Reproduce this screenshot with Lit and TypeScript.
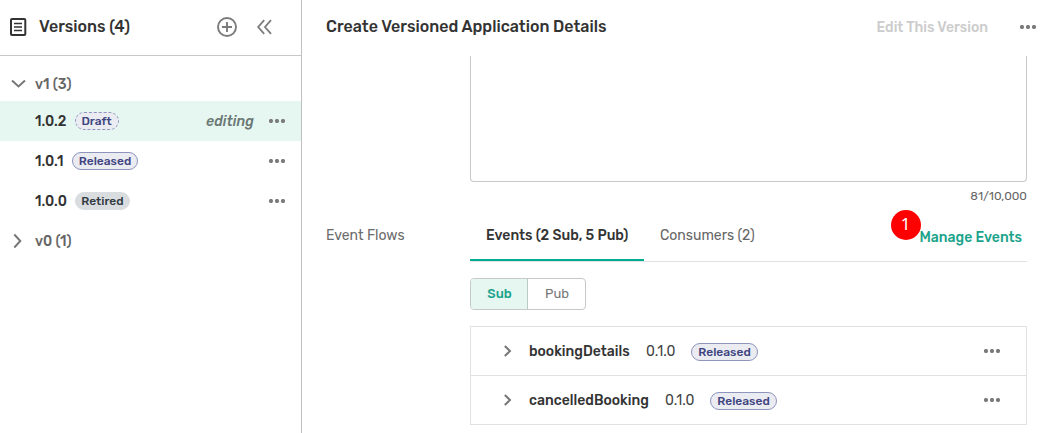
import { LitElement, html, css, svg } from "lit";
import { customElement } from "lit/decorators.js";

const dots = html`<svg class="dots" width="16" height="4" viewBox="0 0 16 4" fill="#7b7b7b">
  ${[2, 8, 14].map((x) => svg`<circle cx=${x} cy="2" r="2.1"></circle>`)}
</svg>`;

const versions = [
  { name: "1.0.2", state: "Draft", editing: true },
  { name: "1.0.1", state: "Released", editing: false },
  { name: "1.0.0", state: "Retired", editing: false },
];

const events = [
  { name: "bookingDetails", cls: "booking", version: "0.1.0" },
  { name: "cancelledBooking", cls: "cancelled", version: "0.1.0" },
];

@customElement("app-root")
export class AppRoot extends LitElement {
  static styles = css`
    :host {
      display: flex;
      width: 100%;
      height: 433px;
      overflow: hidden;
      box-sizing: border-box;
      background: #fff;
      color: #333;
      font: 400 14px/20px Rubik, Roboto, "Liberation Sans", sans-serif;
      white-space: nowrap;
    }
    * { box-sizing: border-box; }
    svg { display: block; flex: none; }
    .grow { flex: 1; }
    .side { width: 302px; flex: none; border-right: 1px solid #bfbfbf; }
    .side-head { display: flex; align-items: center; height: 56px; padding: 0 29px 2px 9px; border-bottom: 1px solid #c6c8c7; }
    .side-title { font-size: 16px; font-weight: 500; margin-left: 12px; padding-top: 1px; }
    .plus { margin-right: 18px; }
    .group { display: flex; align-items: center; height: 40px; padding-left: 10px; color: #555; }
    .group.first { height: 34px; margin-top: 11px; }
    .group svg { margin-right: 8px; }
    .group span { padding-top: 2px; font-weight: 500; color: #666; }
    .row { display: flex; align-items: center; height: 40px; padding: 0 16px 0 35px; }
    .row.on { background: #e6f7f2; }
    .num { font-weight: 500; margin-right: 8px; padding-top: 2px; }
    .num.Released { width: 29px; }
    .editing { font-style: italic; font-weight: 500; color: #6b7774; letter-spacing: 0.1px; margin-right: 15px; padding-top: 2px; }
    .badge { height: 18px; border-radius: 9px; font-size: 12px; line-height: 17px; font-weight: 500; text-align: center; border: 1px solid #8e95bd; background: #ebebf2; color: #40457f; }
    .Draft { width: 44px; border-style: dashed; }
    .badge.Released { width: 66px; }
    .Retired { width: 55px; }
    .badge.Retired { border-color: #dadde0; background: #dadde0; color: #333b43; }
    .main { flex: 1; min-width: 0; }
    .main-head { display: flex; align-items: center; height: 56px; padding: 0 6px 2px 24px; }
    .title { font-size: 16px; font-weight: 500; }
    .edit { color: #ccc; font-weight: 500; margin-right: 32px; padding-top: 2px; }
    .content { display: grid; grid-template-columns: 144px 557px; padding-left: 24px; }
    .area { grid-column: 2; height: 126px; border: 1px solid #c6c8c9; border-top: 0; border-radius: 0 0 4px 4px; }
    .count { grid-column: 2; height: 28px; line-height: 29px; font-size: 12px; text-align: right; color: #666; }
    .label { color: #6c6c6c; line-height: 52px; }
    .tabs { display: flex; height: 52px; border-bottom: 1px solid #e0e2e1; }
    .tab { height: 51px; line-height: 52px; padding-left: 16px; color: #666; }
    .tab.on { width: 174px; color: #333; font-weight: 500; border-bottom: 2px solid #00ad93; }
    .manage { position: relative; height: 51px; line-height: 56px; padding-right: 5px; color: #1ba38b; font-weight: 500; }
    .pin { position: absolute; left: -29px; top: 0; width: 30px; height: 30px; border-radius: 50%; background: #f00; color: #fff; font: 400 17px/28px "Noto Sans", sans-serif; text-align: center; }
    .panel { grid-column: 2; padding-top: 16px; }
    .seg { display: flex; width: 116px; height: 32px; border: 1px solid #c6c9c8; border-radius: 4px; overflow: hidden; font-size: 13px; line-height: 30px; text-align: center; color: #777; }
    .seg .item { flex: 1; padding-left: 1px; }
    .seg .on { flex: none; width: 57px; background: #e6f7f2; border-right: 1px solid #b9cbc6; color: #1ba38b; font-weight: 500; }
    .list { margin-top: 16px; border: 1px solid #e0e2e1; }
    .event { display: flex; align-items: center; height: 48px; padding: 0 26px 0 32px; }
    .event + .event { height: 49px; border-top: 1px solid #e0e2e1; }
    .name { font-weight: 500; margin-left: 16px; padding-top: 2px; }
    .booking { width: 117px; }
    .cancelled { width: 136px; }
    .ver { width: 45px; color: #444; padding-top: 2px; }
    .event .badge { width: 67px; margin-top: 2px; }
  `;

  render() {
    return html`
      <div class="side">
        <div class="side-head">
          <svg width="18" height="20" viewBox="0 0 18 20" fill="none" stroke="#333" stroke-width="2">
            <rect x="2" y="2" width="14.3" height="16" rx="1"></rect>
            <path d="M5 6.5h8M5 10h8M5 13.5h8" stroke-width="1.7"></path>
          </svg>
          <span class="side-title">Versions (4)</span>
          <span class="grow"></span>
          <svg class="plus" width="22" height="22" viewBox="0 0 22 22" fill="none" stroke="#7b7b7b" stroke-width="1.9">
            <circle cx="11" cy="11" r="9"></circle><path d="M11 6v10M6 11h10"></path>
          </svg>
          <svg width="16" height="16" viewBox="0 0 16 16" fill="none" stroke="#7b7b7b" stroke-width="1.8">
            <path d="M8.2 1.2 2.2 8l6 6.8M15 1.2 9 8l6 6.8"></path>
          </svg>
        </div>
        <div class="group first">
          <svg width="17" height="16" viewBox="0 0 17 16" fill="none" stroke="#777" stroke-width="2"><path d="M2 4.5 8.5 10.5 15 4.5"></path></svg>
          <span>v1 (3)</span>
        </div>
        ${versions.map((v) => html`
          <div class="row ${v.editing ? "on" : ""}">
            <span class="num ${v.state === "Released" ? "Released" : ""}">${v.name}</span>
            <span class="badge ${v.state}">${v.state}</span>
            <span class="grow"></span>
            ${v.editing ? html`<span class="editing">editing</span>` : ""}
            ${dots}
          </div>`)}
        <div class="group">
          <svg width="17" height="16" viewBox="0 0 17 16" fill="none" stroke="#777" stroke-width="2"><path d="M4.3 1.5 10.3 8l-6 6.5"></path></svg>
          <span>v0 (1)</span>
        </div>
      </div>
      <div class="main">
        <div class="main-head">
          <span class="title">Create Versioned Application Details</span>
          <span class="grow"></span>
          <span class="edit">Edit This Version</span>
          ${dots}
        </div>
        <div class="content">
          <div class="area"></div>
          <div class="count">81/10,000</div>
          <div class="label">Event Flows</div>
          <div class="tabs">
            <span class="tab on">Events (2 Sub, 5 Pub)</span>
            <span class="tab">Consumers (2)</span>
            <span class="grow"></span>
            <span class="manage">Manage Events<span class="pin">1</span></span>
          </div>
          <div class="panel">
            <div class="seg"><span class="item on">Sub</span><span class="item">Pub</span></div>
            <div class="list">
              ${events.map((e) => html`
                <div class="event">
                  <svg width="10" height="14" viewBox="0 0 10 14" fill="none" stroke="#777" stroke-width="2"><path d="M1.8 2 7 7l-5.2 5"></path></svg>
                  <span class="name ${e.cls}">${e.name}</span>
                  <span class="ver">${e.version}</span>
                  <span class="badge Released">Released</span>
                  <span class="grow"></span>
                  ${dots}
                </div>`)}
            </div>
          </div>
        </div>
      </div>`;
  }
}
